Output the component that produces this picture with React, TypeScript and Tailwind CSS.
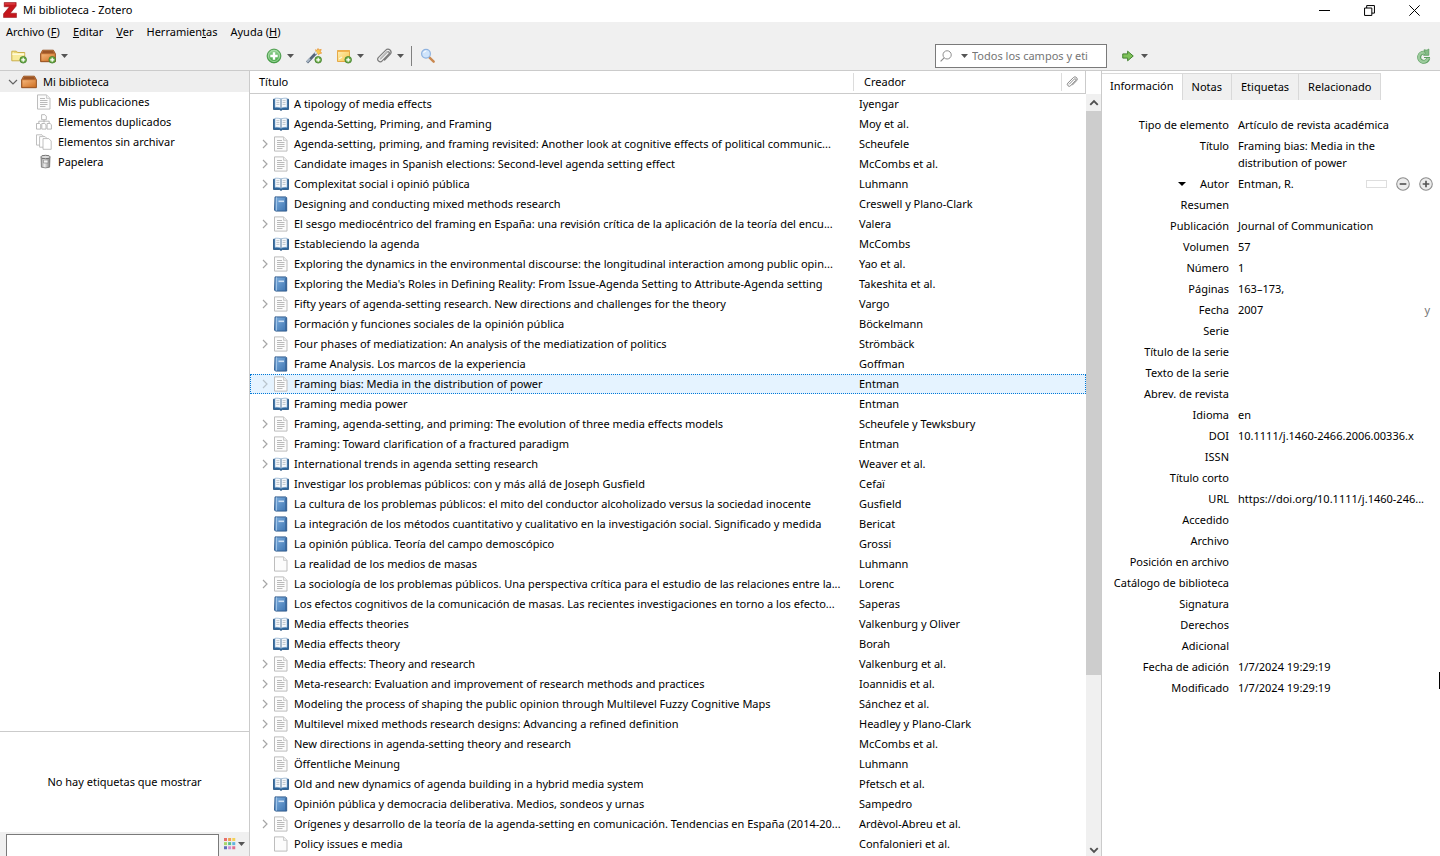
import type { ReactNode } from 'react';
import clsx from 'clsx';

type IconKind = 'section' | 'article' | 'book' | 'document';

type Item = {
  title: string;
  creator: string;
  icon: IconKind;
  children?: boolean;
  selected?: boolean;
};

const items: Item[] = [
  { title: 'A tipology of media effects', creator: 'Iyengar', icon: 'section' },
  { title: 'Agenda-Setting, Priming, and Framing', creator: 'Moy et al.', icon: 'section' },
  { title: 'Agenda-setting, priming, and framing revisited: Another look at cognitive effects of political communic...', creator: 'Scheufele', icon: 'article', children: true },
  { title: 'Candidate images in Spanish elections: Second-level agenda setting effect', creator: 'McCombs et al.', icon: 'article', children: true },
  { title: 'Complexitat social i opinió pública', creator: 'Luhmann', icon: 'section', children: true },
  { title: 'Designing and conducting mixed methods research', creator: 'Creswell y Plano-Clark', icon: 'book' },
  { title: 'El sesgo mediocéntrico del framing en España: una revisión crítica de la aplicación de la teoría del encu...', creator: 'Valera', icon: 'article', children: true },
  { title: 'Estableciendo la agenda', creator: 'McCombs', icon: 'section' },
  { title: 'Exploring the dynamics in the environmental discourse: the longitudinal interaction among public opin...', creator: 'Yao et al.', icon: 'article', children: true },
  { title: "Exploring the Media's Roles in Defining Reality: From Issue-Agenda Setting to Attribute-Agenda setting", creator: 'Takeshita et al.', icon: 'book' },
  { title: 'Fifty years of agenda-setting research. New directions and challenges for the theory', creator: 'Vargo', icon: 'article', children: true },
  { title: 'Formación y funciones sociales de la opinión pública', creator: 'Böckelmann', icon: 'book' },
  { title: 'Four phases of mediatization: An analysis of the mediatization of politics', creator: 'Strömbäck', icon: 'article', children: true },
  { title: 'Frame Analysis. Los marcos de la experiencia', creator: 'Goffman', icon: 'book' },
  { title: 'Framing bias: Media in the distribution of power', creator: 'Entman', icon: 'article', children: true, selected: true },
  { title: 'Framing media power', creator: 'Entman', icon: 'section' },
  { title: 'Framing, agenda-setting, and priming: The evolution of three media effects models', creator: 'Scheufele y Tewksbury', icon: 'article', children: true },
  { title: 'Framing: Toward clarification of a fractured paradigm', creator: 'Entman', icon: 'article', children: true },
  { title: 'International trends in agenda setting research', creator: 'Weaver et al.', icon: 'section', children: true },
  { title: 'Investigar los problemas públicos: con y más allá de Joseph Gusfield', creator: 'Cefaï', icon: 'section' },
  { title: 'La cultura de los problemas públicos: el mito del conductor alcoholizado versus la sociedad inocente', creator: 'Gusfield', icon: 'book' },
  { title: 'La integración de los métodos cuantitativo y cualitativo en la investigación social. Significado y medida', creator: 'Bericat', icon: 'book' },
  { title: 'La opinión pública. Teoría del campo demoscópico', creator: 'Grossi', icon: 'book' },
  { title: 'La realidad de los medios de masas', creator: 'Luhmann', icon: 'document' },
  { title: 'La sociología de los problemas públicos. Una perspectiva crítica para el estudio de las relaciones entre la...', creator: 'Lorenc', icon: 'article', children: true },
  { title: 'Los efectos cognitivos de la comunicación de masas. Las recientes investigaciones en torno a los efecto...', creator: 'Saperas', icon: 'book' },
  { title: 'Media effects theories', creator: 'Valkenburg y Oliver', icon: 'section' },
  { title: 'Media effects theory', creator: 'Borah', icon: 'section' },
  { title: 'Media effects: Theory and research', creator: 'Valkenburg et al.', icon: 'article', children: true },
  { title: 'Meta-research: Evaluation and improvement of research methods and practices', creator: 'Ioannidis et al.', icon: 'article', children: true },
  { title: 'Modeling the process of shaping the public opinion through Multilevel Fuzzy Cognitive Maps', creator: 'Sánchez et al.', icon: 'article', children: true },
  { title: 'Multilevel mixed methods research designs: Advancing a refined definition', creator: 'Headley y Plano-Clark', icon: 'article', children: true },
  { title: 'New directions in agenda-setting theory and research', creator: 'McCombs et al.', icon: 'article', children: true },
  { title: 'Öffentliche Meinung', creator: 'Luhmann', icon: 'article' },
  { title: 'Old and new dynamics of agenda building in a hybrid media system', creator: 'Pfetsch et al.', icon: 'section' },
  { title: 'Opinión pública y democracia deliberativa. Medios, sondeos y urnas', creator: 'Sampedro', icon: 'book' },
  { title: 'Orígenes y desarrollo de la teoría de la agenda-setting en comunicación. Tendencias en España (2014-20...', creator: 'Ardèvol-Abreu et al.', icon: 'article', children: true },
  { title: 'Policy issues e media', creator: 'Confalonieri et al.', icon: 'document' },
];

const fields: { label: string; value?: string }[] = [
  { label: 'Tipo de elemento', value: 'Artículo de revista académica' },
  { label: 'Título', value: 'Framing bias: Media in the distribution of power' },
  { label: 'Autor', value: 'Entman, R.' },
  { label: 'Resumen' },
  { label: 'Publicación', value: 'Journal of Communication' },
  { label: 'Volumen', value: '57' },
  { label: 'Número', value: '1' },
  { label: 'Páginas', value: '163–173,' },
  { label: 'Fecha', value: '2007' },
  { label: 'Serie' },
  { label: 'Título de la serie' },
  { label: 'Texto de la serie' },
  { label: 'Abrev. de revista' },
  { label: 'Idioma', value: 'en' },
  { label: 'DOI', value: '10.1111/j.1460-2466.2006.00336.x' },
  { label: 'ISSN' },
  { label: 'Título corto' },
  { label: 'URL', value: 'https://doi.org/10.1111/j.1460-246...' },
  { label: 'Accedido' },
  { label: 'Archivo' },
  { label: 'Posición en archivo' },
  { label: 'Catálogo de biblioteca' },
  { label: 'Signatura' },
  { label: 'Derechos' },
  { label: 'Adicional' },
  { label: 'Fecha de adición', value: '1/7/2024 19:29:19' },
  { label: 'Modificado', value: '1/7/2024 19:29:19' },
];

/* ---------- icons ---------- */

function Svg({ children, className }: { children: ReactNode; className?: string }) {
  return (
    <svg viewBox="0 0 16 16" fill="none" aria-hidden="true" className={clsx('shrink-0', className ?? 'h-4 w-4')}>
      {children}
    </svg>
  );
}

// Gradients shared by all the icons below
function IconDefs() {
  return (
    <svg aria-hidden="true" className="absolute h-0 w-0">
      <defs>
        <linearGradient id="wood" x1="0" y1="0" x2="0" y2="1">
          <stop offset="0" stopColor="#d98b4c" />
          <stop offset="1" stopColor="#c26a26" />
        </linearGradient>
        <linearGradient id="woodFront" x1="0" y1="0" x2="1" y2="1">
          <stop offset="0" stopColor="#f4b478" />
          <stop offset="1" stopColor="#cf7226" />
        </linearGradient>
        <linearGradient id="leaf" x1="0" y1="0" x2="0" y2="1">
          <stop offset="0" stopColor="#9ad69a" />
          <stop offset="1" stopColor="#3ca03c" />
        </linearGradient>
        <linearGradient id="cover" x1="0" y1="0" x2="1" y2="1">
          <stop offset="0" stopColor="#7fb0e0" />
          <stop offset="1" stopColor="#3d74b0" />
        </linearGradient>
        <linearGradient id="steel" x1="0" y1="0" x2="1" y2="0">
          <stop offset="0" stopColor="#9a9a9a" />
          <stop offset="0.4" stopColor="#ededed" />
          <stop offset="1" stopColor="#808080" />
        </linearGradient>
        <linearGradient id="sticky" x1="0" y1="0" x2="1" y2="1">
          <stop offset="0" stopColor="#fff0b8" />
          <stop offset="1" stopColor="#f7c54a" />
        </linearGradient>
      </defs>
    </svg>
  );
}

// Small green "add" badge in the lower right corner of a toolbar icon
function PlusBadge() {
  return (
    <>
      <circle cx="12.2" cy="11.8" r="3.3" fill="#6fae4a" stroke="#3f7d2a" strokeWidth="0.8" />
      <path d="M12.2 9.8v4M10.2 11.8h4" stroke="#fff" strokeWidth="1.2" />
    </>
  );
}

function Caret() {
  return (
    <svg viewBox="0 0 7 4" aria-hidden="true" className="h-1 w-[7px] shrink-0">
      <path d="M0 0h7L3.500 4z" fill="#555" />
    </svg>
  );
}

function Chevron({ open, faint }: { open?: boolean; faint?: boolean }) {
  return (
    <svg viewBox="0 0 10 10" fill="none" aria-hidden="true" className="h-2.5 w-2.5 shrink-0">
      <path
        d={open ? 'M1 3l4 4 4-4' : 'M3 1l4 4-4 4'}
        stroke={open ? '#646464' : faint ? '#b9c4cc' : '#a6a6a6'}
        strokeWidth="1.200"
      />
    </svg>
  );
}

function ZoteroIcon() {
  return (
    <Svg className="h-[18px] w-4">
      <path d="M2.200 0.500h12v3.600L8.300 11.200h6.200v4.300H1.500v-3.700L7.400 4.800H2.200z" fill="#c4161c" stroke="#8f0d12" strokeWidth="0.5" />
      <path d="M3 1.300h10.400v1.200H3z" fill="#e2474c" />
    </Svg>
  );
}

function FolderAddIcon() {
  return (
    <Svg>
      <path d="M0.800 3.200h4.400l1 1.300h7.500v8.300H0.800z" fill="#f8eb9c" stroke="#c6a83e" strokeWidth="0.9" />
      <path d="M1.300 6.200h12" stroke="#fffbe0" strokeWidth="1.400" />
      <path d="M3 4.200h4" stroke="#e0c65c" strokeWidth="0.8" />
      <PlusBadge />
    </Svg>
  );
}

function LibraryIcon({ add }: { add?: boolean }) {
  return (
    <Svg>
      <path d="M2.600 2.200h10.800l2 3.600v7.900H0.600V5.800z" fill="url(#wood)" stroke="#8f4a17" strokeWidth="0.9" />
      <path d="M3 3h10l1.300 2.500H1.700z" fill="#9c5527" />
      <path d="M1.500 6.300h13v6.500h-13z" fill="url(#woodFront)" />
      {add && <PlusBadge />}
    </Svg>
  );
}

function NewItemIcon() {
  return (
    <Svg>
      <circle cx="8" cy="8" r="6.900" fill="url(#leaf)" stroke="#3f9440" strokeWidth="0.9" />
      <circle cx="8" cy="8" r="5.500" stroke="#b4e0b2" strokeWidth="0.8" />
      <path d="M8 4.300v7.400M4.300 8h7.400" stroke="#fff" strokeWidth="2.400" />
    </Svg>
  );
}

function WandIcon() {
  return (
    <Svg>
      <path d="M1 14.500L10.800 4.300" stroke="#55657a" strokeWidth="2.800" />
      <path d="M1 14L4 10.800" stroke="#a9b6c4" strokeWidth="2" />
      <path d="M9 5.800l2.200-2.200" stroke="#dfe6ee" strokeWidth="2.200" />
      <path d="M9 1.800l2 .6 1-1.900 1 1.500 2.200-.6-.8 2.200 1.200 1.600-2.100.3-1.100 1.700" fill="#f9c74d" stroke="#e8973a" strokeWidth="0.8" />
      <PlusBadge />
    </Svg>
  );
}

function NoteIcon() {
  return (
    <Svg>
      <path d="M1.500 2.500h12v11h-12z" fill="url(#sticky)" stroke="#e2a23a" strokeWidth="0.9" />
      <path d="M1.500 2.500h12v1.500h-12z" fill="#f3b24e" />
      <path d="M3 11l3-2" stroke="#fff6d8" strokeWidth="1.200" />
      <PlusBadge />
    </Svg>
  );
}

function ClipIcon({ className }: { className?: string }) {
  return (
    <Svg className={className}>
      <path
        d="M4.600 10.600L11 4a1.300 1.300 0 011.900 1.900l-6.700 7a2.500 2.500 0 01-3.700-3.500l7.300-7.300a3 3 0 014.300 4.200L8.600 12"
        stroke="#7b7b7b"
        strokeWidth="1.200"
        strokeLinecap="round"
      />
      <path d="M3.800 11.300L11.500 3.400" stroke="#bdbdbd" strokeWidth="1.200" />
    </Svg>
  );
}

function MagnifierIcon() {
  return (
    <Svg>
      <path d="M9.300 9.300l4.400 4.400" stroke="#c98850" strokeWidth="2.400" strokeLinecap="round" />
      <circle cx="6" cy="5.800" r="4.400" fill="#cfe4fb" stroke="#8fb3e0" strokeWidth="1.200" />
      <path d="M3.700 5a2.600 2.600 0 012.600-2" stroke="#fff" strokeWidth="1" />
    </Svg>
  );
}

function SearchIcon() {
  return (
    <Svg className="h-3 w-3">
      <circle cx="9.500" cy="6.500" r="5.500" stroke="#8a8a8a" strokeWidth="1.300" />
      <path d="M5.500 10.500L0.800 15.200" stroke="#8a8a8a" strokeWidth="1.500" />
    </Svg>
  );
}

function LocateIcon() {
  return (
    <Svg className="h-3 w-3">
      <path d="M1 5.200h6.500V1.600L15 8l-7.500 6.400v-3.600H1z" fill="#7fc25a" stroke="#3f7f2c" strokeWidth="1.300" strokeLinejoin="round" />
    </Svg>
  );
}

function SyncIcon() {
  return (
    <Svg>
      <path d="M12.300 10.200A4.600 4.600 0 118.500 4.700" stroke="#5a9c5f" strokeWidth="4" />
      <path d="M12 10A4.600 4.600 0 118.500 4.700" stroke="#9ccb9c" strokeWidth="2.400" />
      <path d="M8 1.800l3 .4L12.800 1v6.300H7.500l1.800-2z" fill="#84bd86" stroke="#5a9c5f" strokeWidth="0.8" />
      <path d="M8 9.500h6" stroke="#5a9c5f" strokeWidth="1" />
    </Svg>
  );
}

function SectionIcon() {
  return (
    <Svg>
      <path d="M0.500 3.200h15v10.300H9.600L8 14.400l-1.600-.9H0.500z" fill="#2c659c" stroke="#1f4e7c" strokeWidth="0.8" />
      <path d="M2 2.300c2.300-.4 4.500-.1 6 1v8.900c-1.600-.9-3.700-1.100-6-.8zM14 2.300c-2.300-.4-4.500-.1-6 1v8.900c1.600-.9 3.700-1.100 6-.8z" fill="#f6f9fc" stroke="#7fa6cc" strokeWidth="0.6" />
      <path d="M3.400 4.600h3M3.400 6.500h3M3.400 8.400h3M9.600 4.600h3M9.600 6.500h3M9.600 8.400h3" stroke="#b3b9c0" strokeWidth="0.8" />
      <path d="M8 3.600v8.500" stroke="#8a9cae" strokeWidth="0.9" />
    </Svg>
  );
}

function BookIcon() {
  return (
    <Svg>
      <path d="M2 0.900h10.700l1 .8v13.400H2.500l-1-1z" fill="url(#cover)" stroke="#2c5788" strokeWidth="0.9" />
      <path d="M3.500 1.400v13.200" stroke="#a7c8ea" strokeWidth="0.9" />
      <path d="M5.500 4.500h5.500v1.600H5.500z" fill="#cfe1f4" />
      <path d="M12.800 1.900v12.700" stroke="#2f5c90" strokeWidth="0.8" />
    </Svg>
  );
}

function PageIcon({ lines }: { lines?: boolean }) {
  return (
    <Svg>
      <path d="M1.500 0.900h9l3.500 3.500v10.700H1.500z" fill="#fcfcfc" stroke="#b5b5b5" strokeWidth="0.9" />
      <path d="M10.500 0.900v3.500H14" fill="#efefef" stroke="#c4c4c4" strokeWidth="0.8" />
      {lines && <path d="M4 4.500h5M4 6.500h7.500M4 8.500h7.500M4 10.500h7.500M4 12.500h5.500" stroke="#b2b2b2" strokeWidth="0.9" />}
    </Svg>
  );
}

function DuplicatesIcon() {
  return (
    <Svg>
      <path d="M8 5.500v3M2.800 9V7.200h10.400V9" stroke="#a8a8a8" strokeWidth="0.8" />
      <path d="M5.600 0.700h3.200l1.500 1.500v3.500H5.600z" fill="#fff" stroke="#a8a8a8" strokeWidth="0.8" />
      <path d="M0.500 9.500h3l1.200 1.200v4.400H0.500zM5.800 9.500h3L10 10.700v4.400H5.800zM11.100 9.500h3l1.300 1.200v4.400h-4.300z" fill="#fff" stroke="#a8a8a8" strokeWidth="0.8" />
    </Svg>
  );
}

function UnfiledIcon() {
  return (
    <Svg>
      <path d="M0.500 0.800h5.500l2 2v8.300H0.500z" fill="#fff" stroke="#b0b0b0" strokeWidth="0.8" />
      <path d="M3.600 2.600h5.500l2 2v8.600H3.600z" fill="#fff" stroke="#b0b0b0" strokeWidth="0.8" />
      <path d="M7 4.600h5.800l2.400 2.400v8.300H7z" fill="#fff" stroke="#b0b0b0" strokeWidth="0.8" />
    </Svg>
  );
}

function TrashIcon() {
  return (
    <Svg>
      <path d="M5 3.500h9l-.4 9.700q-4.100 1.400-8.200 0z" fill="url(#steel)" stroke="#6a6a6a" strokeWidth="0.7" />
      <ellipse cx="9.500" cy="3" rx="4.800" ry="1.700" fill="#dcdcdc" stroke="#666" strokeWidth="0.9" />
      <path d="M7.500 6h4.500v3H7.500z" fill="#f4f4f4" stroke="#8b8b8b" strokeWidth="0.7" />
    </Svg>
  );
}

function SwatchIcon() {
  const colors = ['#e8706a', '#f0a050', '#f3d25a', '#a9d66c', '#56c08a', '#5fb4e0', '#5d6fb8', '#d08bd8', '#e0708c'];
  return (
    <Svg className="h-3 w-3">
      {colors.map((c, i) => (
        <rect key={c} x={(i % 3) * 5.500} y={Math.floor(i / 3) * 5.500} width="4" height="4" fill={c} />
      ))}
    </Svg>
  );
}

function RoundIcon({ plus }: { plus?: boolean }) {
  return (
    <Svg className="h-3.5 w-3.5">
      <circle cx="8" cy="8" r="7.200" fill="#ececec" stroke="#8c8c8c" strokeWidth="1.200" />
      <path d={plus ? 'M8 4.200v7.600M4.200 8h7.600' : 'M4.200 8h7.600'} stroke="#555" strokeWidth="1.900" />
    </Svg>
  );
}

function ItemIcon({ kind }: { kind: IconKind }) {
  if (kind === 'section') return <SectionIcon />;
  if (kind === 'book') return <BookIcon />;
  return <PageIcon lines={kind === 'article'} />;
}

/* ---------- window chrome ---------- */

function TitleBar() {
  return (
    <header className="flex h-[22px] shrink-0 items-center bg-white pb-0.5 pl-[2px]">
      <ZoteroIcon />
      <h1 className="pl-[5px]">Mi biblioteca - Zotero</h1>
      <div className="ml-auto flex items-center gap-[34px] pr-5">
        <button aria-label="Minimizar">
          <Svg className="h-[11px] w-[11px]">
            <path d="M0 8h16" stroke="#000" strokeWidth="1.450" />
          </Svg>
        </button>
        <button aria-label="Restaurar">
          <Svg className="h-[11px] w-[11px]">
            <path d="M0.800 4.400h10.600V15.200H0.800zM3.900 4.400V0.800h11.300v11h-3.800" stroke="#000" strokeWidth="1.450" />
          </Svg>
        </button>
        <button aria-label="Cerrar">
          <Svg className="h-[11px] w-[11px]">
            <path d="M0.500 0.500l15 15M15.500 0.500l-15 15" stroke="#000" strokeWidth="1.450" />
          </Svg>
        </button>
      </div>
    </header>
  );
}

function MenuBar() {
  return (
    <nav className="flex h-5 shrink-0 items-center gap-[13px] bg-[#f0f0f0] pl-1.5">
      <button>Archivo (<u>F</u>)</button>
      <button><u>E</u>ditar</button>
      <button><u>V</u>er</button>
      <button>Herramien<u>t</u>as</button>
      <button>Ayuda (<u>H</u>)</button>
    </nav>
  );
}

function ToolButton({ label, caret, children }: { label: string; caret?: boolean; children: ReactNode }) {
  return (
    <button aria-label={label} className="flex items-center gap-[5px]">
      {children}
      {caret && <Caret />}
    </button>
  );
}

function Toolbar() {
  return (
    <div className="flex h-[29px] shrink-0 items-center border-b border-[#cbcbcb] bg-[#f0f0f0]">
      <div className="flex w-[266px] shrink-0 items-center gap-[13px] pl-[11px]">
        <ToolButton label="Nueva colección"><FolderAddIcon /></ToolButton>
        <ToolButton label="Nueva biblioteca" caret><LibraryIcon add /></ToolButton>
      </div>
      <div className="flex flex-1 items-center gap-3">
        <ToolButton label="Nuevo elemento" caret><NewItemIcon /></ToolButton>
        <ToolButton label="Añadir por identificador"><WandIcon /></ToolButton>
        <div className="pl-0.5">
          <ToolButton label="Nueva nota" caret><NoteIcon /></ToolButton>
        </div>
        <ToolButton label="Añadir adjunto" caret><ClipIcon /></ToolButton>
        <div className="flex items-center gap-2 border-l border-[#808080] py-0.5 pl-2 -ml-[5px]">
          <ToolButton label="Búsqueda avanzada"><MagnifierIcon /></ToolButton>
        </div>
      </div>
      <label className="flex h-6 w-[172px] items-center border border-[#7a7a7a] bg-white pl-1">
        <SearchIcon />
        <span className="flex pr-1 pl-[9px]"><Caret /></span>
        <input
          aria-label="Buscar"
          placeholder="Todos los campos y eti"
          className="min-w-0 flex-1 outline-none placeholder:text-[#757575]"
        />
      </label>
      <div className="flex w-[333px] shrink-0 items-center justify-between pr-2 pl-[15px]">
        <button aria-label="Localizar" className="flex items-center gap-[7px]">
          <LocateIcon />
          <Caret />
        </button>
        <ToolButton label="Sincronizar"><SyncIcon /></ToolButton>
      </div>
    </div>
  );
}

/* ---------- panes ---------- */

function TreeItem({ icon, children }: { icon: ReactNode; children: ReactNode }) {
  return (
    <li className="flex h-5 items-center gap-1.5 pl-9">
      {icon}
      {children}
    </li>
  );
}

function CollectionsPane() {
  return (
    <aside className="flex w-[250px] shrink-0 flex-col border-r border-[#cbcbcb]">
      <ul className="flex-1">
        <li>
          <div className="flex h-[21px] items-center bg-[#eeeeee] pl-2">
            <Chevron open />
            <span className="flex items-center gap-1.5 pl-[3px]">
              <LibraryIcon />
              Mi biblioteca
            </span>
          </div>
          <ul>
            <TreeItem icon={<PageIcon lines />}>Mis publicaciones</TreeItem>
            <TreeItem icon={<DuplicatesIcon />}>Elementos duplicados</TreeItem>
            <TreeItem icon={<UnfiledIcon />}>Elementos sin archivar</TreeItem>
            <TreeItem icon={<TrashIcon />}>Papelera</TreeItem>
          </ul>
        </li>
      </ul>
      <div className="flex h-[101px] items-center justify-center border-t border-[#cbcbcb]">
        No hay etiquetas que mostrar
      </div>
      <div className="flex h-6 items-center bg-[#f0f0f0] pr-1 pl-1.5">
        <input aria-label="Filtrar etiquetas" className="mt-0.5 h-[22px] min-w-0 flex-1 border border-b-0 border-[#7a7a7a] bg-white px-1 outline-none" />
        <button aria-label="Acciones de etiquetas" className="flex items-center gap-0.5 pl-[5px]">
          <SwatchIcon />
          <Caret />
        </button>
      </div>
    </aside>
  );
}

function ItemsTable() {
  return (
    <div className="min-w-0 flex-1">
      <table className="w-full table-fixed border-separate border-spacing-0">
        <colgroup>
          <col />
          <col className="w-[208px]" />
          <col className="w-6" />
        </colgroup>
        <thead>
          <tr className="h-[23px] text-left">
            <th className="border-b border-[#cbcbcb] p-0 font-normal">
              <span className="block border-r border-[#dcdcdc] pl-[9px] leading-[18px]">Título</span>
            </th>
            <th className="border-b border-[#cbcbcb] p-0 font-normal">
              <span className="block border-r border-[#dcdcdc] pl-2.5 leading-[18px]">Creador</span>
            </th>
            <th aria-label="Adjunto" className="border-r border-b border-[#cbcbcb] p-0 pl-1">
              <ClipIcon className="h-3 w-3" />
            </th>
          </tr>
        </thead>
        <tbody>
          {items.map((item) => (
            <tr
              key={item.title}
              className={clsx('h-5', item.selected && 'bg-[#e5f3ff] outline-1 -outline-offset-1 outline-[#0078d7] outline-dotted')}
            >
              <td className="p-0">
                <div className="flex h-5 items-center pl-2.5 whitespace-nowrap">
                  <span className="w-[13px] shrink-0">{item.children && <Chevron faint={item.selected} />}</span>
                  <ItemIcon kind={item.icon} />
                  <span className="pl-[5px]">{item.title}</span>
                </div>
              </td>
              <td className="p-0 pl-[5px] whitespace-nowrap">{item.creator}</td>
              <td className="p-0" />
            </tr>
          ))}
        </tbody>
      </table>
    </div>
  );
}

function ScrollBar() {
  return (
    <div className="w-4 shrink-0 border-r border-[#cbcbcb] pt-[23px]">
      <div className="flex h-full flex-col bg-[#f0f0f0]">
        <button aria-label="Subir" className="flex h-[17px] items-center justify-center">
          <Svg className="h-2.5 w-2.5">
            <path d="M2 11l6-6 6 6" stroke="#505050" strokeWidth="3" />
          </Svg>
        </button>
        <div className="flex-1">
          <div className="h-[77%] bg-[#cdcdcd]" />
        </div>
        <button aria-label="Bajar" className="flex h-3 items-center justify-center">
          <Svg className="h-2.5 w-2.5">
            <path d="M2 5l6 6 6-6" stroke="#505050" strokeWidth="3" />
          </Svg>
        </button>
      </div>
    </div>
  );
}

function Tab({ active, children }: { active?: boolean; children: ReactNode }) {
  return (
    <button
      role="tab"
      aria-selected={!!active}
      className={clsx(
        'h-[27px] border-t border-r border-[#d9d9d9]',
        active ? 'bg-white px-2 pb-0.5' : 'bg-[#f0f0f0] px-[9px]',
      )}
    >
      {children}
    </button>
  );
}

function ItemPane() {
  return (
    <section className="relative w-[338px] shrink-0 pt-0.5">
      <div role="tablist" className="flex">
        <Tab active>Información</Tab>
        <Tab>Notas</Tab>
        <Tab>Etiquetas</Tab>
        <Tab>Relacionado</Tab>
      </div>
      <dl className="pt-3.5 leading-[17px]">
        {fields.map(({ label, value }) => (
          <div key={label} className="flex gap-[9px] py-0.5 pr-[7px]">
            <dt className="flex w-[127px] shrink-0 items-start justify-end gap-3.5 whitespace-nowrap">
              {label === 'Autor' && (
                <svg viewBox="0 0 8 4" aria-hidden="true" className="mt-[7px] h-1 w-2">
                  <path d="M0 0h8L4 4z" fill="#000" />
                </svg>
              )}
              {label}
            </dt>
            <dd className={clsx('flex-1', label === 'Título' ? 'pr-9' : 'whitespace-nowrap')}>{value}</dd>
            {label === 'Autor' && (
              <dd className="flex items-center gap-[9px]">
                <span className="h-2 w-[21px] border border-[#dedede]" />
                <button aria-label="Quitar autor"><RoundIcon /></button>
                <button aria-label="Añadir autor"><RoundIcon plus /></button>
              </dd>
            )}
            {label === 'Fecha' && <dd className="pr-[3px] text-[#757575]">y</dd>}
          </div>
        ))}
      </dl>
      {/* splitter grip on the window edge */}
      <span className="absolute right-0 bottom-[167px] h-[17px] w-px bg-black" />
    </section>
  );
}

export default function App() {
  return (
    <div className="flex h-screen flex-col overflow-hidden bg-white font-['Noto_Sans',sans-serif] text-[11px] leading-4 text-black">
      <IconDefs />
      <TitleBar />
      <MenuBar />
      <Toolbar />
      <main className="flex min-h-0 flex-1">
        <CollectionsPane />
        <div className="flex min-w-0 flex-1 overflow-hidden">
          <ItemsTable />
          <ScrollBar />
        </div>
        <ItemPane />
      </main>
    </div>
  );
}
